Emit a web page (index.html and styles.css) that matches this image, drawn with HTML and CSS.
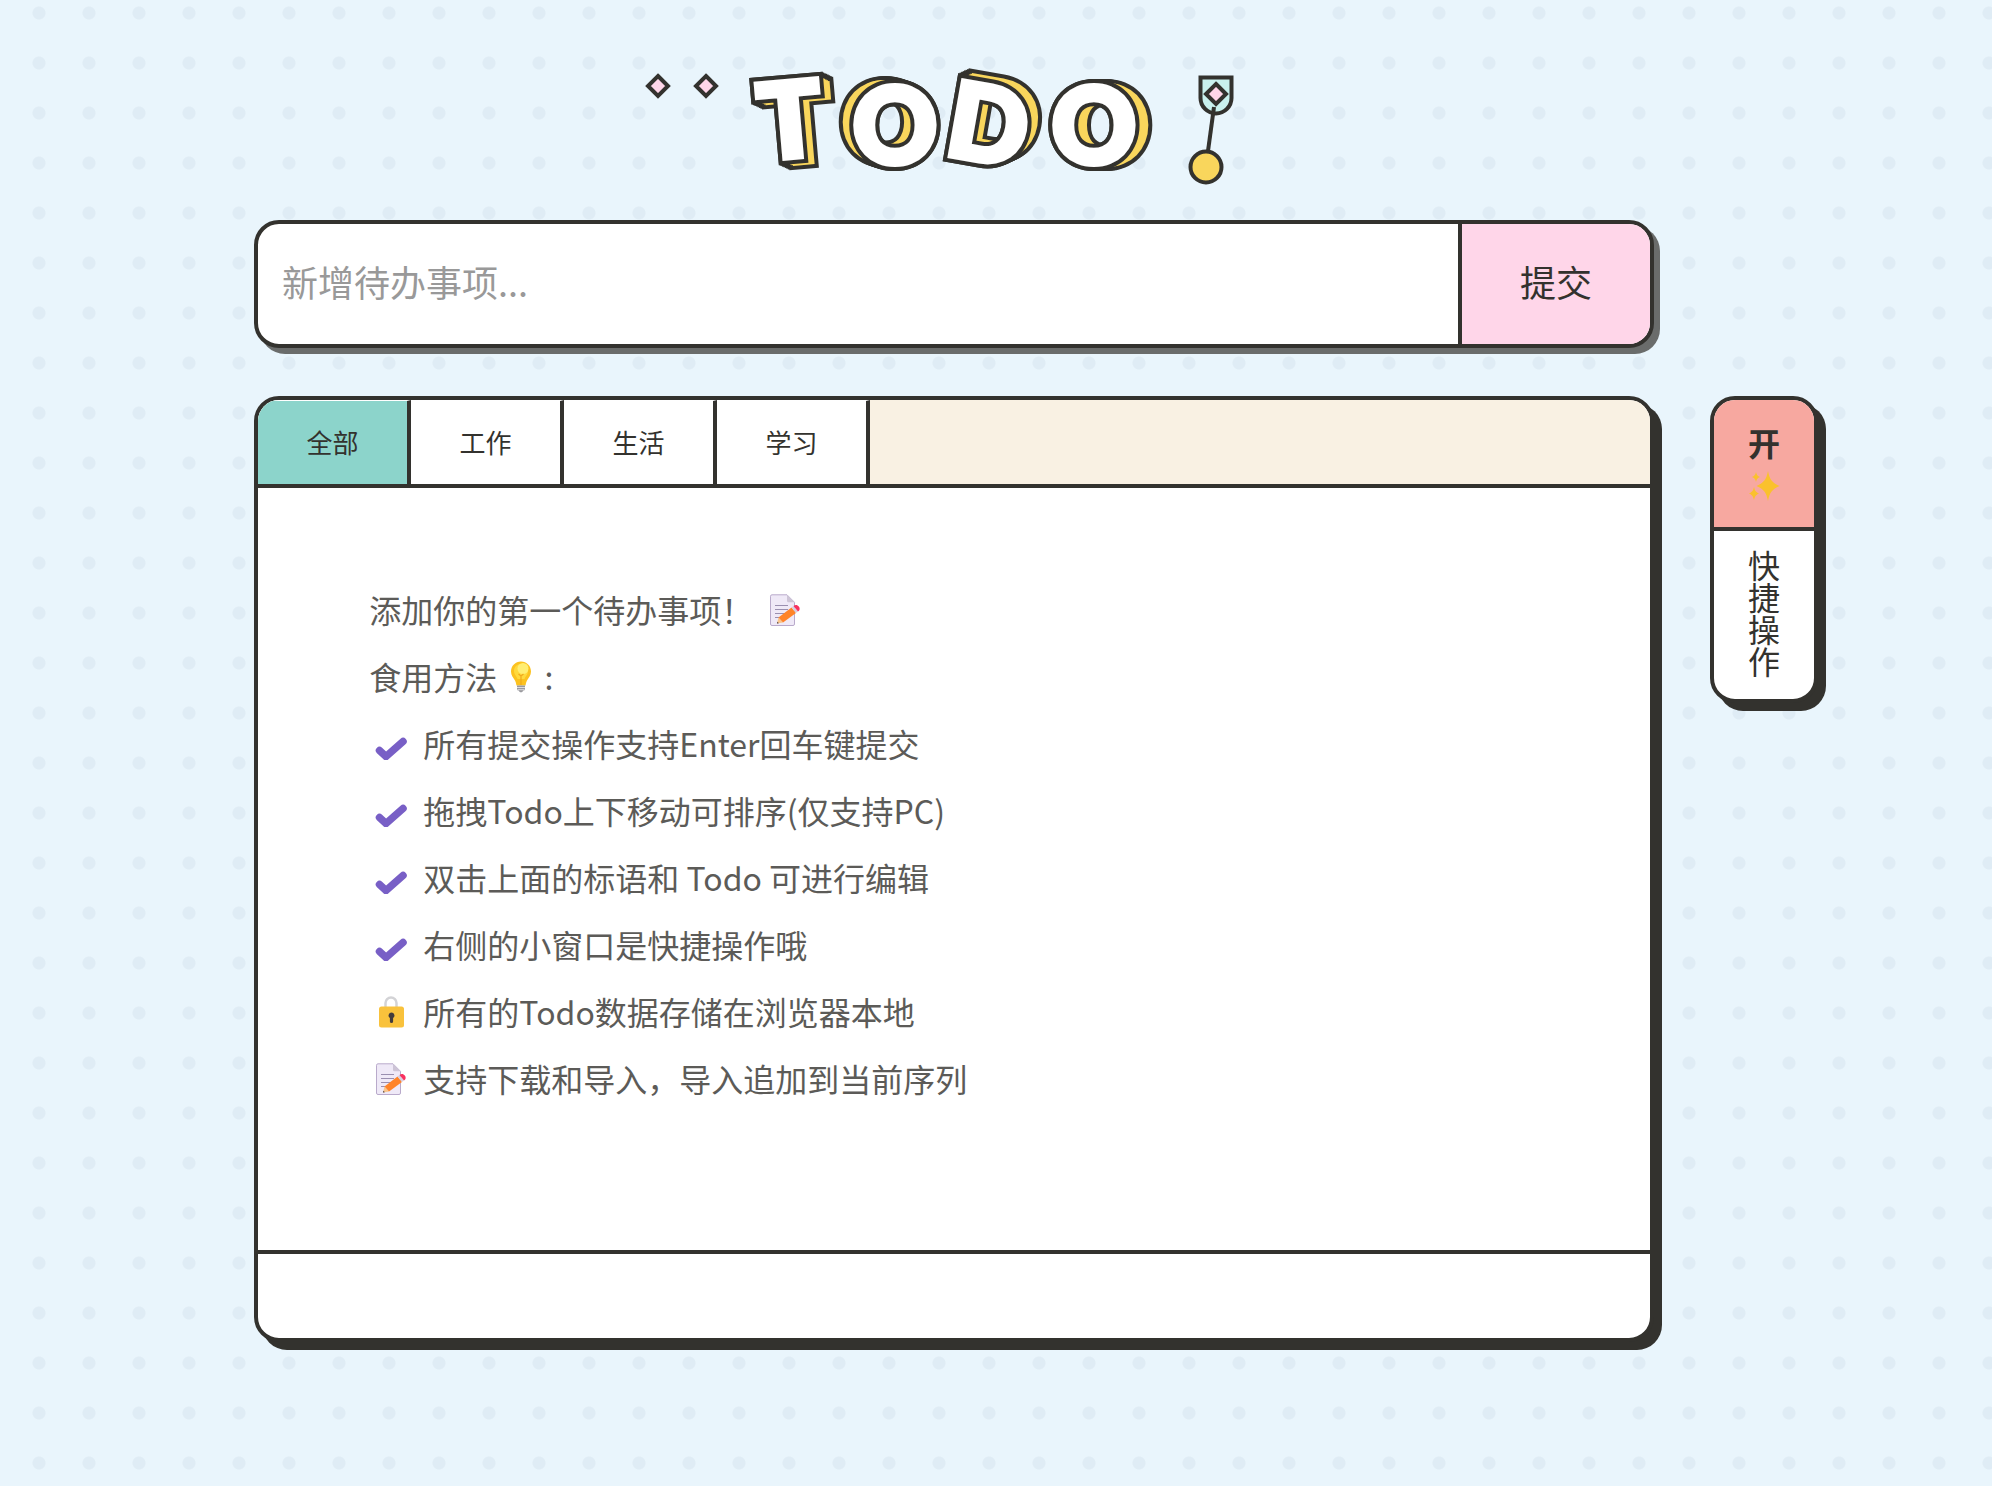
FILE: index.html
```html
<!DOCTYPE html>
<html lang="zh-CN">
<head>
<meta charset="utf-8">
<meta name="viewport" content="width=device-width, initial-scale=1">
<title>TODO</title>
<link rel="stylesheet" href="styles.css">
</head>
<body>
<svg class="sprite" aria-hidden="true">
  <symbol id="check" viewBox="0 0 32 32">
    <path d="M4.500 22.500 11 28.500 28 13.500" fill="none" stroke="#785fc6" stroke-width="7.500" stroke-linecap="round" stroke-linejoin="round"/>
  </symbol>
  <symbol id="memo" viewBox="0 0 32 32">
    <path d="M3 .8h15l7.500 7.500V30a1.500 1.500 0 0 1-1.500 1.500H3A1.500 1.500 0 0 1 1.500 30V2.300A1.500 1.500 0 0 1 3 .8z" fill="#efe9f7" stroke="#b9aacb"/>
    <path d="M18 .8v6a1.500 1.500 0 0 0 1.500 1.500h6z" fill="#cdc4d6"/>
    <path d="M6 11.500h13M6 15.500h13M6 19.500h10M6 23.500h6" stroke="#9a8fb0" stroke-width="1.200"/>
    <path d="M8 29.500l1.500-6 4.500 5z" fill="#f9c58c"/>
    <path d="M9.500 23.500 22.500 13.500 27 19 14 28.500z" fill="#ff8429"/>
    <path d="M22.500 13.500 24.500 12 29 17.500 27 19z" fill="#d8cfe0"/>
    <path d="M24.500 12c2-1.800 4-1.200 5.300.5 1.400 1.700 1.200 3.700-.8 5z" fill="#f8315f"/>
    <path d="M8 29.500l.5-1.800 1.300 1.500z" fill="#332b33"/>
  </symbol>
  <symbol id="bulb" viewBox="0 0 32 32">
    <path d="M16 .5C10.300.5 6 4.900 6 10.500c0 4 2.400 6.500 4 9 .9 1.500 1 3 1.500 5h9c.5-2 .6-3.500 1.500-5 1.600-2.500 4-5 4-9C26 4.900 21.700.5 16 .5z" fill="#fcc21f"/>
    <path d="M16 3c-4 0-7 3-7 7 0 3.500 2.500 5 3.500 8h7c1-3 3.500-4.500 3.500-8 0-4-3-7-7-7z" fill="#ffd93d"/>
    <circle cx="18" cy="7.500" r="5.500" fill="#ffee72"/>
    <path d="M13.500 13l2.500 2 2.500-2M16 15v9" fill="none" stroke="#f0a81d" stroke-width="1.200"/>
    <path d="M12 24.500h8V28c0 1-1 1.500-1.800 1.500-.3 1-1 1.800-2.200 1.800s-1.900-.8-2.200-1.800C13 29.500 12 29 12 28z" fill="#9a9a9f"/>
    <path d="M12 26.500h8M12.500 28.700h7" stroke="#dcdce0" stroke-width="1"/>
  </symbol>
  <symbol id="lock" viewBox="0 0 32 32">
    <path d="M10.500 12V7a5.500 5.500 0 0 1 11 0v5" fill="none" stroke="#d3d3d6" stroke-width="2.500"/>
    <rect x="4" y="10.500" width="25" height="21" rx="2.500" fill="#f9c23c"/>
    <path d="M16.500 16.500a3 3 0 0 0-1.600 5.500v3.500a1.600 1.600 0 0 0 3.200 0V22a3 3 0 0 0-1.600-5.500z" fill="#433b3b"/>
  </symbol>
  <symbol id="sparkles" viewBox="0 0 32 32">
    <path d="M20 1c1.800 9 4 11.500 11.500 15C24 19.500 21.800 22 20 31c-1.800-9-4-11.500-11.500-15C16 12.500 18.200 10 20 1z" fill="#fac12d"/>
    <path d="M8 2c.8 3 1.500 3.800 4 5-2.500 1.200-3.200 2-4 5-.8-3-1.500-3.800-4-5C6.500 5.800 7.200 5 8 2z" fill="#fac12d"/>
    <path d="M6 17c1 4 2 5 5 6.500C8 25 7 26 6 30c-1-4-2-5-5-6.500C4 22 5 21 6 17z" fill="#fac12d"/>
  </symbol>
</svg>

<div class="page">
  <header class="header">
    <h1 class="title">
      <svg class="logo" viewBox="644 64 592 124" role="img" aria-label="TODO">
        <defs>
          <g id="t0"><text transform="translate(793 157) rotate(-5)">T</text></g>
          <g id="t1"><use href="#t0"/><use href="#t0" x="1.500" y=".7"/></g>
          <g id="t2"><use href="#t1"/><use href="#t1" x="3" y="1.400"/></g>
          <g id="t3"><use href="#t2"/><use href="#t2" x="6" y="2.800"/></g>
          <g id="o0"><text transform="translate(895 163)">O</text></g>
          <g id="o1"><use href="#o0"/><use href="#o0" x="-1.500" y="-.5"/></g>
          <g id="o2"><use href="#o1"/><use href="#o1" x="-3" y="-1"/></g>
          <g id="o3"><use href="#o2"/><use href="#o2" x="-6" y="-2"/></g>
          <g id="d0"><text transform="translate(982 161) rotate(10)">D</text></g>
          <g id="d1"><use href="#d0"/><use href="#d0" x="1.500" y="-.7"/></g>
          <g id="d2"><use href="#d1"/><use href="#d1" x="3" y="-1.400"/></g>
          <g id="d3"><use href="#d2"/><use href="#d2" x="6" y="-2.800"/></g>
          <g id="p0"><text transform="translate(1094 163)">O</text></g>
          <g id="p1"><use href="#p0"/><use href="#p0" x="1.800"/></g>
          <g id="p2"><use href="#p1"/><use href="#p1" x="3.600"/></g>
          <g id="p3"><use href="#p2"/><use href="#p2" x="7.200"/></g>
        </defs>
        <g class="ornament">
          <path class="pink" d="M658 76 668 86 658 96 648 86z"/>
          <path class="pink" d="M706 76 716 86 706 96 696 86z"/>
        </g>
        <g class="letter"><use class="edge" href="#t3"/><use class="side" href="#t3"/><use class="edge" href="#t0"/><use class="face" href="#t0"/></g>
        <g class="letter"><use class="edge" href="#o3"/><use class="side" href="#o3"/><use class="edge" href="#o0"/><use class="face" href="#o0"/></g>
        <g class="letter"><use class="edge" href="#d3"/><use class="side" href="#d3"/><use class="edge" href="#d0"/><use class="face" href="#d0"/></g>
        <g class="letter"><use class="edge" href="#p3"/><use class="side" href="#p3"/><use class="edge" href="#p0"/><use class="face" href="#p0"/></g>
        <g class="ornament">
          <path class="mint" d="M1200.500 77.500h31V98a15.500 15.500 0 0 1-31 0z"/>
          <path class="pink" d="M1216 84 1226 94 1216 104 1206 94z"/>
          <path d="M1214 107 1208 151"/>
          <circle class="yellow" cx="1206" cy="167" r="15.500"/>
        </g>
      </svg>
    </h1>
  </header>

  <form class="add">
    <input class="add-input" type="text" aria-label="新增待办事项" placeholder="新增待办事项...">
    <button class="add-submit" type="button">提交</button>
  </form>

  <main class="panel">
    <nav class="tabs">
      <button class="tab tab-active" type="button">全部</button>
      <button class="tab" type="button">工作</button>
      <button class="tab" type="button">生活</button>
      <button class="tab" type="button">学习</button>
    </nav>
    <section class="guide">
      <p class="line">添加你的第一个待办事项！<svg class="icon icon-memo"><use href="#memo"/></svg></p>
      <p class="line">食用方法<svg class="icon icon-bulb"><use href="#bulb"/></svg>&nbsp;:</p>
      <ul class="tips">
        <li class="line tip"><svg class="icon"><use href="#check"/></svg>所有提交操作支持Enter回车键提交</li>
        <li class="line tip"><svg class="icon"><use href="#check"/></svg>拖拽Todo上下移动可排序(仅支持PC)</li>
        <li class="line tip"><svg class="icon"><use href="#check"/></svg>双击上面的标语和 Todo 可进行编辑</li>
        <li class="line tip"><svg class="icon"><use href="#check"/></svg>右侧的小窗口是快捷操作哦</li>
        <li class="line tip"><svg class="icon"><use href="#lock"/></svg>所有的Todo数据存储在浏览器本地</li>
        <li class="line tip"><svg class="icon"><use href="#memo"/></svg>支持下载和导入，导入追加到当前序列</li>
      </ul>
    </section>
    <footer class="panel-footer"></footer>
  </main>

  <aside class="quick">
    <button class="quick-toggle" type="button">开<svg class="icon"><use href="#sparkles"/></svg></button>
    <div class="quick-label">快捷操作</div>
  </aside>
</div>
</body>
</html>
```
FILE: styles.css
```css
:root {
  --ink: #33322e;
  --pink: #ffd6e9;
  --yellow: #f9d65c;
}

* {
  box-sizing: border-box;
}

body {
  margin: 0;
  min-height: 100vh;
  color: var(--ink);
  font-family: "Noto Sans CJK SC", "Noto Sans", sans-serif;
  background: #e9f5fc radial-gradient(circle, #dfecf5 6px, transparent 7px) 14px -12px / 50px 50px;
}

button,
input {
  margin: 0;
  border: 0;
  border-radius: 0;
  color: inherit;
  font-family: inherit;
}

.sprite {
  position: absolute;
  width: 0;
  height: 0;
}

.page {
  display: grid;
  grid-template-columns: minmax(0, 1400px) 108px;
  column-gap: 56px;
  justify-content: center;
  align-items: start;
  padding: 64px 0 64px 80px;
}

.header {
  grid-column: 1;
  padding-right: 28px;
  margin-bottom: 32px;
}

.title {
  display: flex;
  justify-content: center;
  margin: 0;
}

.logo {
  width: 592px;
  max-width: 100%;
  height: 124px;
  overflow: visible;
}

.letter {
  font: 900 104px Lato, sans-serif;
  text-anchor: middle;
}

.edge {
  fill: var(--ink);
  stroke: var(--ink);
  stroke-width: 14;
}

.side {
  fill: var(--yellow);
  stroke: var(--yellow);
  stroke-width: 6;
}

.face {
  fill: #fff;
  stroke: #fff;
  stroke-width: 6;
}

.ornament {
  fill: none;
  stroke: var(--ink);
  stroke-width: 4;
}

.pink {
  fill: var(--pink);
}

.mint {
  fill: #c9f1ee;
}

.yellow {
  fill: var(--yellow);
}

.add {
  grid-column: 1;
  display: flex;
  height: 128px;
  margin-bottom: 48px;
  overflow: hidden;
  border: 4px solid var(--ink);
  border-radius: 25px;
  background: #fff;
  box-shadow: 6px 6px 0 rgba(51, 50, 46, 0.7);
}

.add-input {
  flex: 1;
  min-width: 0;
  padding: 0 24px 6px;
  background: none;
  font-size: 36px;
}

.add-input::placeholder {
  color: #999;
  opacity: 1;
}

.add-submit {
  width: 192px;
  padding: 0 0 6px;
  border-left: 4px solid var(--ink);
  background: var(--pink);
  font-size: 36px;
}

.panel {
  grid-column: 1;
  overflow: hidden;
  border: 4px solid var(--ink);
  border-radius: 25px;
  background: #fff;
  box-shadow: 8px 8px 0 var(--ink);
}

.tabs {
  display: flex;
  height: 88px;
  border-bottom: 4px solid var(--ink);
  background: #f9f1e3;
}

.tab {
  width: 153px;
  padding: 0 0 3px;
  border-top: 1px solid #fff;
  border-right: 4px solid var(--ink);
  background: #fff;
  font-size: 26px;
}

.tab-active {
  background: #8cd4cb;
}

.guide {
  min-height: 762px;
  padding: 88px 8%;
  color: #5c5b58;
  font-size: 32px;
}

.line {
  display: flex;
  align-items: center;
  margin: 0;
  min-height: 67px;
  line-height: 67px;
}

.icon {
  flex: none;
  width: 32px;
  height: 32px;
}

.icon-memo {
  margin-left: 16px;
}

.icon-bulb {
  margin-left: 8px;
}

.tips {
  margin: 0;
  padding: 0;
  list-style: none;
}

.tip {
  gap: 16px;
  padding-left: 6px;
}

.panel-footer {
  height: 88px;
  border-top: 4px solid var(--ink);
}

.quick {
  overflow: hidden;
  border: 4px solid var(--ink);
  border-radius: 25px;
  background: #fff;
  box-shadow: 8px 8px 0 var(--ink);
  font-size: 32px;
}

.quick-toggle {
  display: flex;
  flex-direction: column;
  gap: 12px;
  align-items: center;
  justify-content: center;
  width: 100%;
  height: 131px;
  padding: 0;
  border-bottom: 4px solid var(--ink);
  background: #f7a8a0;
  font-size: 32px;
  font-weight: 700;
  line-height: 32px;
}

.quick-label {
  width: 32px;
  height: 168px;
  margin: 0 auto;
  padding: 17px 0;
  line-height: 32px;
}
```
